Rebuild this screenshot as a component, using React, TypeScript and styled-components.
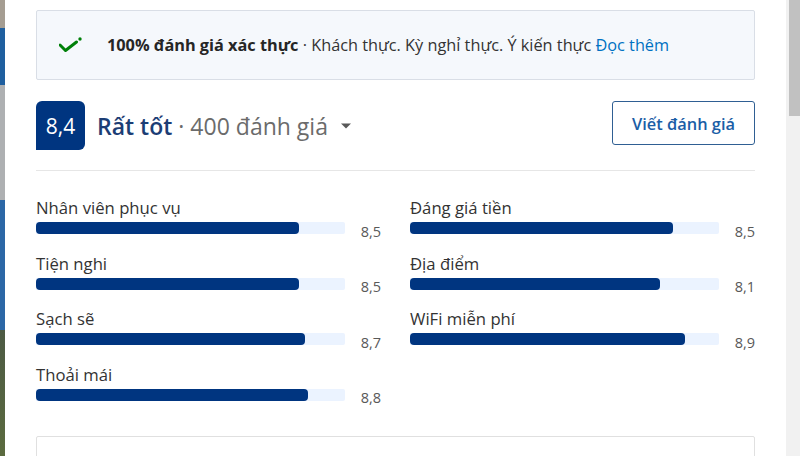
import React from "react";
import styled, { createGlobalStyle } from "styled-components";

const Global = createGlobalStyle`
  html, body { margin: 0; padding: 0; background: #fff; }
  body { font-family: "Open Sans", "Noto Sans", Arial, sans-serif; color: #262626; }
  * { box-sizing: border-box; }
`;

const Page = styled.div`
  display: flex;
  width: 800px;
  height: 456px;
  overflow: hidden;
`;

const PhotoStrip = styled.div`
  width: 5px;
  flex: none;
  background: linear-gradient(
    to bottom,
    #a59d92 0px, #a59d92 28px,
    #1f5f9f 28px, #1f5f9f 85px,
    #aeb0b2 85px, #aeb0b2 200px,
    #2c67a6 200px, #2c67a6 330px,
    #4d5a44 330px, #5b6b3f 456px
  );
`;

const Main = styled.main`
  flex: 1;
  padding: 10px 31px 0;
  display: flex;
  flex-direction: column;
  & > * { flex-shrink: 0; }
`;

const ScrollTrack = styled.div`
  width: 14px;
  flex: none;
  background: #f1f1f1;
  display: flex;
  justify-content: flex-end;
`;

const ScrollThumb = styled.div`
  width: 11px;
  height: 116px;
  background: #c1c1c1;
`;

const Banner = styled.div`
  height: 70px;
  border: 1px solid #d9dee6;
  background: #f5f8fc;
  border-radius: 2px;
  display: flex;
  align-items: center;
  padding-left: 22px;
  gap: 24px;
  font-size: 16.3px;
  color: #333;
`;

const BannerText = styled.p`
  margin: 0;
  line-height: 22px;
`;

const Strong = styled.strong`
  font-weight: 700;
  color: #262626;
`;

const Link = styled.a`
  color: #0071c2;
  text-decoration: none;
`;

const Header = styled.div`
  margin-top: 21px;
  display: flex;
  justify-content: space-between;
  align-items: flex-start;
`;

const TitleGroup = styled.div`
  display: flex;
  align-items: center;
  gap: 12px;
`;

const ScoreBadge = styled.div`
  width: 49px;
  height: 49px;
  background: #003580;
  color: #fff;
  border-radius: 6px 6px 6px 0;
  display: flex;
  align-items: center;
  justify-content: center;
  font-size: 21px;
  font-weight: 500;
`;

const Title = styled.div`
  font-size: 23px;
  display: flex;
  align-items: center;
  gap: 12px;
`;

const Verdict = styled.span`
  color: #1c3d75;
  font-weight: 600;
`;

const Count = styled.span`
  color: #6b6b6b;
`;

const WriteButton = styled.button`
  width: 143px;
  height: 44px;
  border: 1px solid #2f5f93;
  border-radius: 3px;
  background: #fff;
  color: #1b5ea6;
  font-family: inherit;
  font-size: 16.4px;
  font-weight: 600;
  cursor: pointer;
`;

const Divider = styled.hr`
  margin: 20px 0 0;
  border: none;
  border-top: 1px solid #e6e6e6;
`;

const Grid = styled.div`
  margin-top: 27px;
  display: grid;
  grid-template-columns: 345px 345px;
  column-gap: 29px;
  align-items: start;
`;

const Column = styled.div`
  display: flex;
  flex-direction: column;
  gap: 19.6px;
`;

const Row = styled.div`
  display: flex;
  flex-direction: column;
  gap: 4px;
`;

const Label = styled.div`
  font-size: 16.7px;
  line-height: 20px;
  color: #333;
`;

const BarLine = styled.div`
  display: flex;
  align-items: center;
  height: 12px;
`;

const Track = styled.div`
  width: 309px;
  height: 12px;
  background: #ebf3ff;
  border-radius: 0 2px 2px 0;
`;

const Fill = styled.div`
  height: 100%;
  background: #003580;
  border-radius: 4px;
`;

const Score = styled.span`
  flex: 1;
  text-align: right;
  font-size: 14.5px;
  color: #595959;
  position: relative;
  top: 3px;
`;

const BottomCard = styled.div`
  margin-top: 35px;
  height: 60px;
  border: 1px solid #e0e0e0;
  border-radius: 2px;
`;

const CheckIcon = () => (
  <svg width="24" height="16" viewBox="0 0 24 16" aria-hidden>
    <path d="M1 8 L6.5 13.5 L17.5 5" fill="none" stroke="#008009" strokeWidth="3" strokeLinecap="round" strokeLinejoin="round" />
    <circle cx="21" cy="2" r="1.7" fill="#008009" />
  </svg>
);

const Caret = () => (
  <svg width="12" height="8" viewBox="0 0 12 8" aria-hidden>
    <path d="M1 1.5 H11 L6 6.5 Z" fill="#595959" />
  </svg>
);

type Item = { label: string; score: number };

const left: Item[] = [
  { label: "Nhân viên phục vụ", score: 8.5 },
  { label: "Tiện nghi", score: 8.5 },
  { label: "Sạch sẽ", score: 8.7 },
  { label: "Thoải mái", score: 8.8 },
];

const right: Item[] = [
  { label: "Đáng giá tiền", score: 8.5 },
  { label: "Địa điểm", score: 8.1 },
  { label: "WiFi miễn phí", score: 8.9 },
];

const fmt = (n: number) => n.toFixed(1).replace(".", ",");

const RatingColumn = ({ items }: { items: Item[] }) => (
  <Column>
    {items.map((it) => (
      <Row key={it.label}>
        <Label>{it.label}</Label>
        <BarLine>
          <Track>
            <Fill style={{ width: `${it.score * 10}%` }} />
          </Track>
          <Score>{fmt(it.score)}</Score>
        </BarLine>
      </Row>
    ))}
  </Column>
);

export default function App() {
  return (
    <Page>
      <Global />
      <PhotoStrip />
      <Main>
        <Banner>
          <CheckIcon />
          <BannerText>
            <Strong>100% đánh giá xác thực</Strong> · Khách thực. Kỳ nghỉ thực. Ý kiến thực{" "}
            <Link href="#">Đọc thêm</Link>
          </BannerText>
        </Banner>
        <Header>
          <TitleGroup>
            <ScoreBadge>8,4</ScoreBadge>
            <Title>
              <span>
                <Verdict>Rất tốt</Verdict> <Count>· 400 đánh giá</Count>
              </span>
              <Caret />
            </Title>
          </TitleGroup>
          <WriteButton>Viết đánh giá</WriteButton>
        </Header>
        <Divider />
        <Grid>
          <RatingColumn items={left} />
          <RatingColumn items={right} />
        </Grid>
        <BottomCard />
      </Main>
      <ScrollTrack>
        <ScrollThumb />
      </ScrollTrack>
    </Page>
  );
}
